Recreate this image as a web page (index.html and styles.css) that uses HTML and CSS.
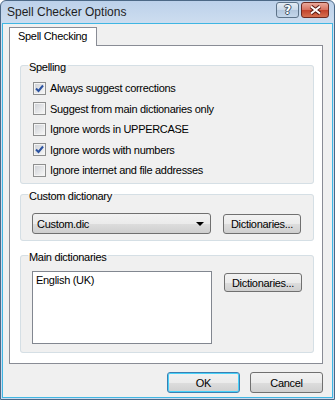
FILE: index.html
```html
<!DOCTYPE html>
<html>
<head>
    <meta charset="UTF-8">
    <title>Spell Checker Options</title>
    <link rel="stylesheet" href="styles.css">
</head>
<body>
<div class="window">
    <div class="titlebar">
        <span class="title">Spell Checker Options</span>
        <div class="caption-buttons">
            <span class="cbtn help">?</span>
            <span class="cbtn close">
                <svg width="13" height="10" viewBox="0 0 13 10">
                    <path d="M2 1.5 L11 8.5 M11 1.5 L2 8.5" stroke="#5a1a12" stroke-width="4" fill="none"/>
                    <path d="M2 1.5 L11 8.5 M11 1.5 L2 8.5" stroke="#ffffff" stroke-width="2" fill="none"/>
                </svg>
            </span>
        </div>
    </div>

    <div class="client">
        <div class="tabs">
            <div class="tab">Spell Checking</div>
        </div>

        <div class="panel">
            <fieldset class="group spelling">
                <legend>Spelling</legend>
                <label class="row"><span class="check"><svg width="9" height="9" viewBox="0 0 9 9"><path d="M1 4.5 L3.5 7 L8 1.5" stroke="#2b52a0" stroke-width="2" fill="none"/></svg></span>Always suggest corrections</label>
                <label class="row"><span class="check"></span>Suggest from main dictionaries only</label>
                <label class="row"><span class="check"></span>Ignore words in UPPERCASE</label>
                <label class="row"><span class="check"><svg width="9" height="9" viewBox="0 0 9 9"><path d="M1 4.5 L3.5 7 L8 1.5" stroke="#2b52a0" stroke-width="2" fill="none"/></svg></span>Ignore words with numbers</label>
                <label class="row"><span class="check"></span>Ignore internet and file addresses</label>
            </fieldset>

            <fieldset class="group custom">
                <legend>Custom dictionary</legend>
                <div class="line">
                    <div class="combo">
                        <span>Custom.dic</span>
                        <span class="arrow"></span>
                    </div>
                    <button class="btn">Dictionaries...</button>
                </div>
            </fieldset>

            <fieldset class="group main">
                <legend>Main dictionaries</legend>
                <div class="line top">
                    <div class="listbox">
                        <div class="item">English (UK)</div>
                    </div>
                    <button class="btn">Dictionaries...</button>
                </div>
            </fieldset>
        </div>

        <div class="footer">
            <button class="btn wide default">OK</button>
            <button class="btn wide">Cancel</button>
        </div>
    </div>
</div>
</body>
</html>
```

FILE: styles.css
```css
* {
    box-sizing: border-box;
}
body {
    margin: 0;
    font-family: "Liberation Sans", Arial, sans-serif;
    font-size: 11px;
    letter-spacing: -0.3px;
    color: #000;
    background: #ffffff;
}
.window {
    width: 335px;
    height: 400px;
    display: flex;
    flex-direction: column;
    border: 1px solid #4c6886;
    border-radius: 6px 6px 0 0;
    background: linear-gradient(#bcd1ea, #d3e1f1 30px, #c8daef);
}

/* title bar */
.titlebar {
    height: 22px;
    display: flex;
    align-items: center;
    justify-content: space-between;
    padding: 0 5px 0 6px;
}
.title {
    font-size: 12px;
    letter-spacing: 0;
    color: #1e1e1e;
    padding-bottom: 1px;
}
.caption-buttons {
    display: flex;
    gap: 2px;
    align-self: flex-start;
    margin-top: 1px;
}
.cbtn {
    height: 16px;
    display: flex;
    align-items: center;
    justify-content: center;
    border: 1px solid #5d7389;
    border-radius: 3px;
}
.help {
    width: 23px;
    background: linear-gradient(#e3ebf4, #c9d8e9 50%, #b3c7de 51%, #c4d6ea);
    color: #fff;
    font-family: "DejaVu Sans", sans-serif;
    font-weight: bold;
    font-size: 12px;
    text-shadow: 1px 0 0 #3b4e63, -1px 0 0 #3b4e63, 0 1px 0 #3b4e63, 0 -1px 0 #3b4e63;
}
.close {
    width: 28px;
    border-color: #6d2a20;
    background: linear-gradient(#e9a99b, #d7715f 50%, #c2422b 51%, #d56f4f);
}

/* client area */
.client {
    flex: 1;
    margin: 0 1px 1px 1px;
    border: 1px solid #3fb6e3;
    background: #f0f0f0;
    padding: 3px 9px 0 6px;
    display: flex;
    flex-direction: column;
}
.tabs {
    display: flex;
}
.tab {
    width: 88px;
    height: 19px;
    margin-bottom: -1px;
    border: 1px solid #898c95;
    border-bottom: none;
    background: #ffffff;
    padding: 2px 0 0 8px;
    position: relative;
}
.panel {
    height: 319px;
    border: 1px solid #898c95;
    background: #ffffff;
    padding: 0 8px 0 10px;
}

/* group boxes */
.group {
    margin: 0;
    border: 1px solid #d5dfe5;
    border-radius: 3px;
    background: #f0f0f0;
    padding: 0 10px 0 11px;
    min-width: 0;
}
.group legend {
    padding: 5px 2px 0 1px;
    margin-left: -4px;
    line-height: 13px;
}
.spelling {
    margin-top: 10px;
    height: 128px;
    padding-top: 4px;
    padding-left: 12px;
}
.spelling legend {
    margin-left: -5px;
}
.custom {
    margin-top: 1px;
    height: 56px;
    padding-top: 10px;
}
.main {
    margin-top: 5px;
    height: 107px;
    padding-top: 7px;
}

.row {
    height: 20.5px;
    display: flex;
    align-items: center;
    gap: 4px;
}
.check {
    width: 13px;
    height: 13px;
    flex: none;
    border: 1px solid #8e8f8f;
    padding: 1px;
    display: flex;
    background: linear-gradient(135deg, #d0d3d8, #f5f5f5) content-box, #f4f4f4;
}

.line {
    display: flex;
    align-items: center;
    gap: 12px;
}
.line.top {
    align-items: flex-start;
}
.combo {
    width: 179px;
    height: 21px;
    border: 1px solid #707070;
    border-radius: 3px;
    background: linear-gradient(#f2f2f2, #ebebeb 50%, #dddddd 51%, #cfcfcf);
    display: flex;
    align-items: center;
    justify-content: space-between;
    padding: 0 6px 0 4px;
}
.arrow {
    width: 0;
    height: 0;
    border-left: 4px solid transparent;
    border-right: 4px solid transparent;
    border-top: 4px solid #000;
}
.btn {
    font-family: "Liberation Sans", Arial, sans-serif;
    font-size: 11px;
    letter-spacing: -0.3px;
    color: #000;
    width: 78px;
    height: 20px;
    padding: 0;
    border: 1px solid #707070;
    border-radius: 3px;
    background: linear-gradient(#f2f2f2, #ebebeb 50%, #dddddd 51%, #cfcfcf);
}
.main .btn {
    margin-top: 2px;
    height: 19px;
}
.listbox {
    width: 180px;
    height: 73px;
    border: 1px solid #828790;
    background: #ffffff;
    padding: 1px 3px;
}
.item {
    line-height: 15px;
}

/* dialog buttons */
.footer {
    display: flex;
    justify-content: flex-end;
    gap: 10px;
    margin-top: 8px;
}
.btn.wide {
    width: 73px;
    height: 21px;
}
.btn.default {
    border-color: #3c7fb1;
    box-shadow: inset 0 0 0 1px #48d1f9;
}
```
